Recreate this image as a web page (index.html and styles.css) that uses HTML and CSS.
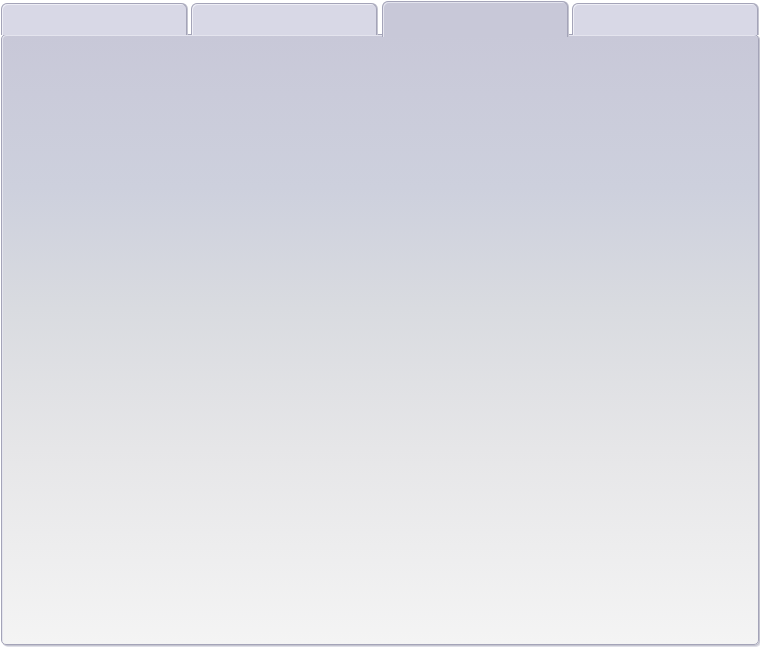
FILE: index.html
```html
<!DOCTYPE html>
<html>
<head>
<meta charset="utf-8">
<link rel="stylesheet" href="styles.css">
</head>
<body>
<div class="tabview">
  <div class="tabs">
    <div class="tab"></div>
    <div class="tab"></div>
    <div class="tab active"></div>
    <div class="tab"></div>
  </div>
  <div class="panel"></div>
</div>
</body>
</html>
```
FILE: styles.css
```css
html, body {
  margin: 0;
  padding: 0;
  background: #ffffff;
  font-family: "Liberation Sans", Arial, sans-serif;
}
.tabview {
  width: 760px;
  height: 649px;
  padding-left: 1px;
  box-sizing: border-box;
}
.tabs {
  display: flex;
  align-items: flex-end;
  gap: 4px;
  height: 35px;
  position: relative;
  z-index: 2;
}
.tab {
  width: 186px;
  height: 32px;
  box-sizing: border-box;
  border: 1px solid #a4a4b8;
  border-bottom: none;
  border-radius: 6px 6px 0 0;
  background: #d8d8e6;
  box-shadow: inset 1px 1px 0 #eeeef6, 1px 0 0 #c4c4d0;
}
.tab.active {
  height: 36px;
  margin-bottom: -2px;
  margin-left: 1px;
  background: #c8c8d8;
  box-shadow: inset 1px 1px 0 #e4e4ee, 1px 0 0 #c4c4d0;
}
.panel {
  width: 758px;
  height: 611px;
  margin-top: -1px;
  box-sizing: border-box;
  border: 1px solid #a4a4b8;
  border-radius: 5px;
  background: linear-gradient(to bottom, #c8c8d8 0%, #cdd0dd 25%, #d9dbe0 45%, #e6e6e8 68%, #f4f4f4 100%);
  box-shadow: inset 1px 1px 0 #e4e4ee, 1px 1px 0 #c4c4d0, 2px 2px 0 #e0e0e8;
  position: relative;
  z-index: 1;
}
```
